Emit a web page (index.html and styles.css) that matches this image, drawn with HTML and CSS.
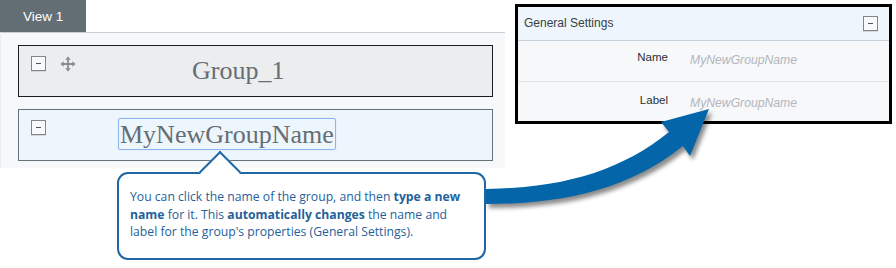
FILE: index.html
```html
<!DOCTYPE html>
<html lang="en">

<head>
  <meta charset="UTF-8">
  <meta name="viewport" content="width=device-width, initial-scale=1.0">
  <title>Group name</title>
  <link rel="stylesheet" href="styles.css">
</head>

<body>
  <div class="screen">
    <div class="designer">
      <div class="view-tab">View 1</div>
      <div class="canvas">
        <div class="group group-saved">
          <span class="toggle"></span>
          <svg class="move-icon" width="16" height="16" viewBox="0 0 16 16">
            <path d="M8 1.5v13M1.5 8h13" />
            <path class="head" d="M8 0.5l-2.8 3.2h5.6zM8 15.5l-2.8-3.2h5.6zM0.5 8l3.2-2.8v5.6zM15.5 8l-3.2-2.8v5.6z" />
          </svg>
          <span class="group-title">Group_1</span>
        </div>
        <div class="group group-editing">
          <span class="toggle"></span>
          <span class="group-title group-input">MyNewGroupName</span>
        </div>
      </div>

      <div class="callout">
        <span class="callout-tip"></span>
        <p>You can click the name of the group, and then <strong>type a new</strong><br>
          <strong>name</strong> for it. This <strong>automatically changes</strong> the name and<br>
          label for the group's properties (General Settings).</p>
      </div>
    </div>

    <div class="props">
      <div class="props-header">
        <span>General Settings</span>
        <span class="toggle"></span>
      </div>
      <div class="props-row">
        <span class="props-label">Name</span>
        <span class="props-value">MyNewGroupName</span>
      </div>
      <div class="props-row">
        <span class="props-label">Label</span>
        <span class="props-value">MyNewGroupName</span>
      </div>
    </div>

    <!-- big pointer from the callout to the properties panel -->
    <svg class="link-arrow" width="896" height="268" viewBox="0 0 896 268">
      <path d="M486 189 C565 188 622 170 669 132 L661 122 L709 109 L690 156 L683 146 C628 190 562 204 486 204 Z" />
    </svg>
  </div>
</body>

</html>
```

FILE: styles.css
```css
* {
  box-sizing: border-box;
  margin: 0;
  padding: 0;
}

body {
  background: #fff;
  font-family: 'Liberation Sans', Arial, sans-serif;
}

.screen {
  position: relative;
  width: 896px;
  height: 268px;
  display: flex;
  align-items: flex-start;
}

.designer {
  width: 505px;
}

.view-tab {
  width: 86px;
  height: 32px;
  background: #636e75;
  color: #fff;
  font-size: 13.5px;
  line-height: 33px;
  padding-left: 23px;
}

.canvas {
  height: 136px;
  background: #f7f8fa;
  border-top: 1px solid #c9ced6;
  border-left: 1px solid #eceef1;
  padding: 12px 12px 0 17px;
  display: flex;
  flex-direction: column;
  gap: 12px;
}

.group {
  width: 475px;
  height: 52px;
  display: flex;
  align-items: flex-start;
  padding: 10px 12px;
}

.group-saved {
  background: #ecedef;
  border: 1px solid #1b1e21;
}

.group-editing {
  background: #eef6fd;
  border: 1px solid #66737b;
}

.toggle {
  position: relative;
  display: block;
  width: 15px;
  height: 15px;
  border: 1px solid #7d868c;
  background: #f8f9fa;
  box-shadow: 0 1px 0 #d5d9dc;
  flex-shrink: 0;
}

.toggle::after {
  content: "";
  position: absolute;
  left: 4px;
  top: 6px;
  width: 5px;
  height: 1px;
  background: #4a5157;
}

.move-icon {
  margin-left: 14px;
  stroke: #868e94;
  stroke-width: 1.8;
  fill: none;
}

.move-icon .head {
  fill: #868e94;
  stroke: none;
}

.group-title {
  font-family: 'Liberation Serif', 'Times New Roman', serif;
  font-size: 26px;
  line-height: 27px;
  color: #656e74;
}

.group-saved .group-title {
  margin-left: 116px;
  margin-top: 1px;
}

.group-input {
  margin-left: 72px;
  margin-top: -2px;
  padding: 2px 1px 1px;
  border: 1px solid #8db4ee;
  border-radius: 2px;
  box-shadow: 0 0 1px #a9c6f3;
}

.callout {
  position: relative;
  width: 369px;
  height: 88px;
  margin: 4px 0 0 117px;
  border: 2px solid #1e67a4;
  border-radius: 11px;
  background: #fff;
  padding: 14px 6px 0 11px;
  font-family: 'Open Sans', sans-serif;
  font-size: 12.2px;
  line-height: 17.5px;
  color: #24619c;
}

.callout p {
  position: relative;
}

.callout-tip {
  position: absolute;
  left: 86px;
  top: -17px;
  width: 30px;
  height: 30px;
  background: #fff;
  border-top: 2px solid #1e67a4;
  border-left: 2px solid #1e67a4;
  transform: rotate(45deg);
}

.props {
  width: 377px;
  height: 120px;
  margin: 4px 0 0 10px;
  border: 3px solid #000;
  background: #f7f8fa;
  font-size: 11.5px;
  color: #333;
}

.props-header {
  height: 34px;
  background: #eef5fc;
  border-bottom: 1px solid #c6d0da;
  display: flex;
  align-items: center;
  justify-content: space-between;
  padding: 0 11px 1px 6px;
  font-size: 12px;
  color: #3a3f44;
}

.props-row {
  height: 40px;
  display: flex;
  align-items: flex-start;
  padding-top: 10px;
  gap: 22px;
}

.props-row + .props-row {
  border-top: 1px solid #e2e4e8;
  height: 41px;
  padding-top: 12px;
}

.props-label {
  width: 150px;
  text-align: right;
  color: #2b2f33;
}

.props-value {
  font-size: 12.2px;
  font-style: italic;
  color: #b3b6ba;
  margin-top: 2px;
}

.link-arrow {
  position: absolute;
  left: 0;
  top: 0;
  pointer-events: none;
  fill: #0465a9;
  filter: drop-shadow(3px 4px 2px rgba(0, 0, 0, 0.45));
}
```
